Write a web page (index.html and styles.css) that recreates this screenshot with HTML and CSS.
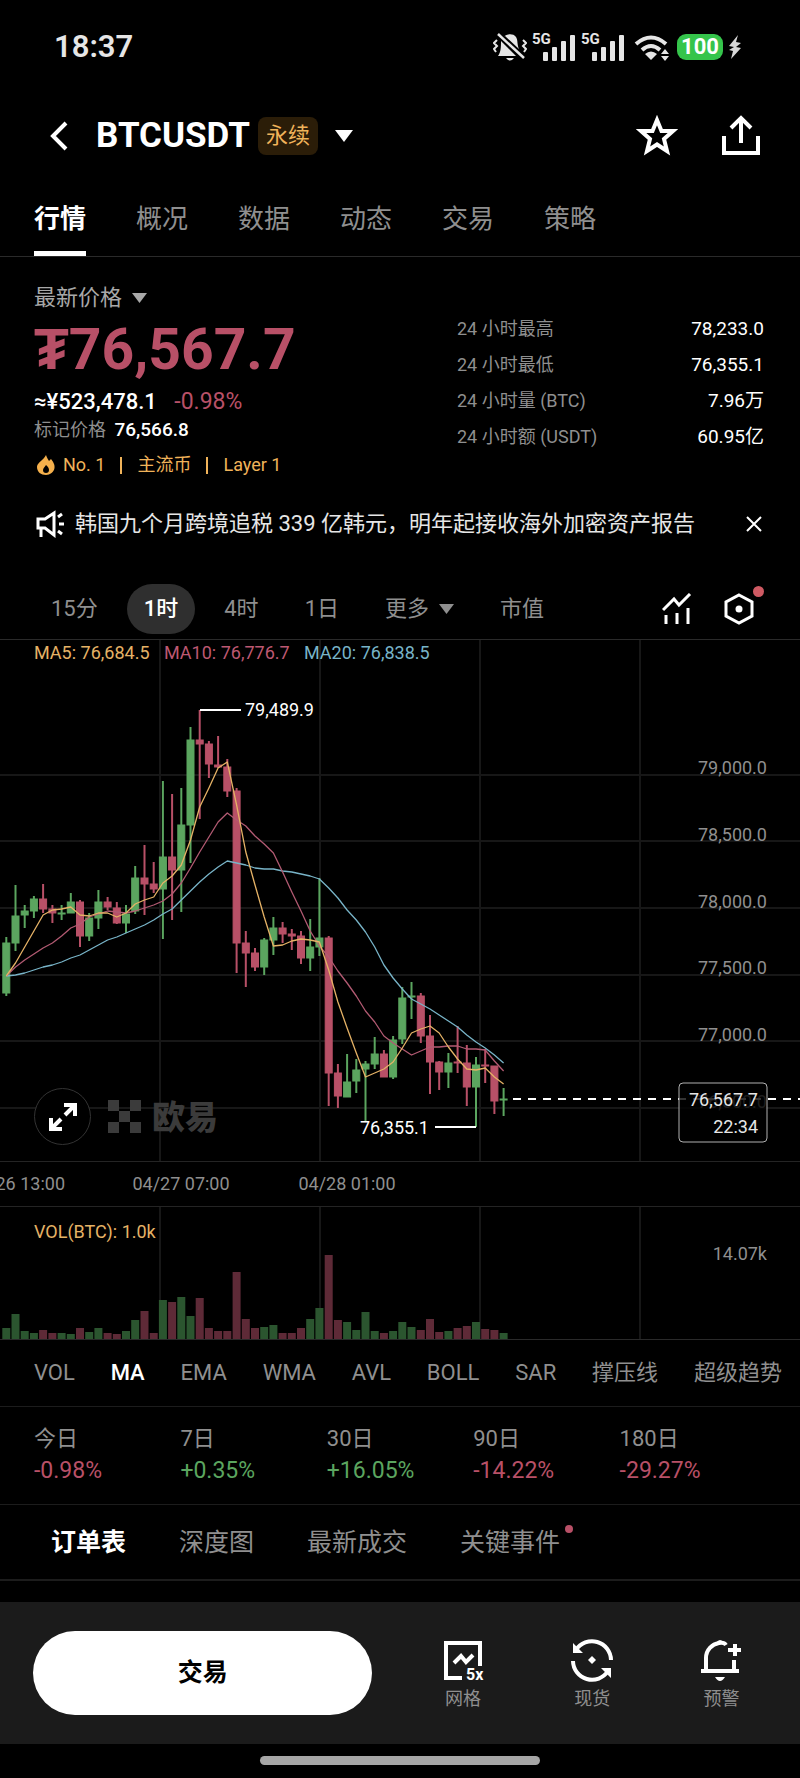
FILE: index.html
```html
<!DOCTYPE html>
<html lang="zh-CN">
<head>
    <meta charset="UTF-8">
    <meta name="viewport" content="width=device-width, initial-scale=1.0">
    <title>BTCUSDT 永续</title>
    <link rel="stylesheet" href="styles.css">
</head>
<body>
    <!-- Status bar -->
    <div class="status-bar">
        <span class="clock">18:37</span>
        <div class="status-icons">
            <svg width="34" height="30" viewBox="0 0 34 30" fill="#e6e6e6">
                <path d="M11 5C13 2 20 1 23 5C25 8 24 13 26 17L12 4Z"/>
                <path d="M8 9L23 24H5C8 20 8 15 8 9Z"/>
                <path d="M13 26H21Q17 31 13 26Z"/>
                <path d="M5 2L31 26" stroke="#e6e6e6" stroke-width="2.5"/>
                <path d="M4 8L1 11L4 14L1 17L3 20M30 8L33 11L30 14L33 17L31 20" fill="none" stroke="#e6e6e6" stroke-width="2"/>
            </svg>
            <svg class="signal" width="44" height="34" viewBox="0 -2 44 34" fill="#e6e6e6">
                <text x="0" y="12">5G</text>
                <rect x="11" y="20" width="5" height="9" rx="1"/>
                <rect x="20" y="15" width="5" height="14" rx="1"/>
                <rect x="29" y="9" width="5" height="20" rx="1"/>
                <rect x="38" y="3" width="5" height="26" rx="1"/>
            </svg>
            <svg class="signal" width="44" height="34" viewBox="0 -2 44 34" fill="#e6e6e6">
                <text x="0" y="12">5G</text>
                <rect x="11" y="20" width="5" height="9" rx="1"/>
                <rect x="20" y="15" width="5" height="14" rx="1"/>
                <rect x="29" y="9" width="5" height="20" rx="1"/>
                <rect x="38" y="3" width="5" height="26" rx="1"/>
            </svg>
            <svg class="wifi" width="36" height="30" viewBox="0 0 36 30" fill="none" stroke="#e6e6e6" stroke-width="4">
                <path d="M2 12Q17 -1 32 12"/>
                <path d="M8 18Q17 10 26 18"/>
                <path d="M17 28L11 22Q17 17 23 22Z" fill="#e6e6e6" stroke="none"/>
                <path d="M31 17L35 22H27ZM31 29L35 24H27Z" fill="#e6e6e6" stroke="none"/>
            </svg>
            <span class="battery">100</span>
            <svg class="bolt" width="14" height="26" viewBox="0 0 14 26" fill="#d8d8d8">
                <path d="M10 1L1 12L6 13L1 16L5 17L3 25L13 14L8 13L13 9L8 8Z"/>
            </svg>
        </div>
    </div>

    <!-- Title -->
    <header class="header">
        <button class="icon-btn" aria-label="返回">
            <svg width="19" height="30" viewBox="0 0 19 30" fill="none" stroke="#fff" stroke-width="4"><path d="M17 2L4 15L17 28"/></svg>
        </button>
        <h1 class="symbol">BTCUSDT</h1>
        <span class="badge">永续</span>
        <button class="icon-btn pair-caret" aria-label="切换交易对">
            <svg width="18" height="12" viewBox="0 0 18 12" fill="#fff"><path d="M0 0H18L9 12Z"/></svg>
        </button>
        <div class="header-actions">
            <button class="icon-btn" aria-label="收藏">
                <svg width="42" height="42" viewBox="0 0 42 42" fill="none" stroke="#fff" stroke-width="4"><path d="M21 5L25.500 16H37L28 24L31 36L21 29.500L11 36L14 24L5 16H16.500Z"/></svg>
            </button>
            <button class="icon-btn" aria-label="分享">
                <svg width="40" height="42" viewBox="0 0 40 42" fill="none" stroke="#fff" stroke-width="4"><path d="M3 21V38H37V21M20 28V4M10 13L20 3L30 13"/></svg>
            </button>
        </div>
    </header>

    <nav class="main-tabs">
        <a class="active" href="#market">行情</a>
        <a href="#overview">概况</a>
        <a href="#data">数据</a>
        <a href="#news">动态</a>
        <a href="#trade">交易</a>
        <a href="#strategy">策略</a>
    </nav>

    <!-- Price summary -->
    <section class="summary" id="market">
        <div class="price-block">
            <button class="price-type">最新价格 <svg width="15" height="10" viewBox="0 0 15 10" fill="#a8a8a8"><path d="M0 0H15L7.500 10Z"/></svg></button>
            <div class="last-price"><span class="currency">₮</span>76,567.7</div>
            <div class="fiat">≈¥523,478.1 <span class="change down">-0.98%</span></div>
            <div class="mark">标记价格 <b>76,566.8</b></div>
            <div class="tags">
                <svg width="18" height="20" viewBox="0 0 18 20"><path d="M9 0C10 3 11 4 12 6L14 4C16 7 18 9 17.500 13C17 17 13 20 9 20C4 20 0 17 0 12C0 9 3 7 5 5C7 3 8 2 9 0Z" fill="#f5b04c"/><path d="M9 10C11 12 12 13 12 15A3 3 0 0 1 6 15C6 13 8 12 9 10Z" fill="#000"/></svg>
                <span>No. 1</span><i></i><span>主流币</span><i></i><span>Layer 1</span>
            </div>
        </div>
        <dl class="stats">
            <div><dt>24 小时最高</dt><dd>78,233.0</dd></div>
            <div><dt>24 小时最低</dt><dd>76,355.1</dd></div>
            <div><dt>24 小时量 (BTC)</dt><dd>7.96万</dd></div>
            <div><dt>24 小时额 (USDT)</dt><dd>60.95亿</dd></div>
        </dl>
    </section>

    <!-- Announcement -->
    <div class="notice">
        <svg width="28" height="28" viewBox="0 0 28 28" fill="none" stroke="#fff" stroke-width="3"><path d="M2 9H9L18 3V25L9 18H2ZM5 18V27M22 7L26 4M23 14H28M22 21L26 24"/></svg>
        <a href="#notice">韩国九个月跨境追税 339 亿韩元，明年起接收海外加密资产报告</a>
        <button class="icon-btn" aria-label="关闭">
            <svg width="16" height="16" viewBox="0 0 16 16" stroke="#fff" stroke-width="2"><path d="M1 1L15 15M15 1L1 15"/></svg>
        </button>
    </div>

    <!-- Intervals -->
    <div class="intervals">
        <button>15分</button>
        <button class="active">1时</button>
        <button>4时</button>
        <button>1日</button>
        <button>更多 <svg width="15" height="10" viewBox="0 0 15 10" fill="#8f8f8f"><path d="M0 0H15L7.500 10Z"/></svg></button>
        <button>市值</button>
        <div class="chart-tools">
            <button aria-label="指标">
                <svg width="30" height="32" viewBox="0 0 30 32" fill="none" stroke="#fff" stroke-width="3"><path d="M1 17L12 6L17 12L28 1M4 22V31M15 20V31M26 15V31"/></svg>
            </button>
            <button class="has-dot" aria-label="设置">
                <svg width="30" height="32" viewBox="0 0 30 32" fill="none" stroke="#fff" stroke-width="3"><path d="M15 2L28 9V23L15 30L2 23V9Z"/><circle cx="15" cy="16" r="3.500" fill="#fff" stroke="none"/></svg>
            </button>
        </div>
    </div>

    <!-- Candles -->
    <div class="chart">
        <svg class="plot" viewBox="0 0 800 521">
            <path class="grid" d="M0 135H800M0 201H800M0 268H800M0 335H800M0 401H800M0 468H800M160 0V521M320 0V521M480 0V521M640 0V521"/>
            <g class="logo">
                <path d="M108 460h11v11h-11zM130 460h11v11h-11zM119 471h11v11h-11zM108 482h11v11h-11zM130 482h11v11h-11z"/>
                <text x="152" y="489">欧易</text>
            </g>
            <g id="candles"></g>
            <g id="averages"></g>
            <text class="ma5" x="34" y="19">MA5: 76,684.5</text>
            <text class="ma10" x="164" y="19">MA10: 76,776.7</text>
            <text class="ma20" x="304" y="19">MA20: 76,838.5</text>
            <g class="axis">
                <text x="767" y="134">79,000.0</text>
                <text x="767" y="201">78,500.0</text>
                <text x="767" y="268">78,000.0</text>
                <text x="767" y="334">77,500.0</text>
                <text x="767" y="401">77,000.0</text>
                <text x="767" y="468">76,500.0</text>
            </g>
            <path class="marker" d="M200 70H241M435 487H476"/>
            <text class="marker-text" x="245" y="76">79,489.9</text>
            <text class="marker-text" x="360" y="494">76,355.1</text>
            <path class="last-line" d="M513 459H800"/>
            <rect class="last-box" x="679" y="443" width="88" height="59" rx="4"/>
            <g class="last-text">
                <text x="758" y="466">76,567.7</text>
                <text x="758" y="493">22:34</text>
            </g>
        </svg>
        <button class="expand" aria-label="全屏">
            <svg width="30" height="30" viewBox="0 0 30 30" fill="none" stroke="#fff" stroke-width="4"><path d="M17 13L27 3M16 3H27V14M13 17L3 27M3 16V27H14"/></svg>
        </button>
    </div>
    <svg class="plot time-axis" viewBox="0 0 800 44">
        <text x="65" y="28" text-anchor="end">04/26 13:00</text>
        <text x="181" y="28" text-anchor="middle">04/27 07:00</text>
        <text x="347" y="28" text-anchor="middle">04/28 01:00</text>
    </svg>
    <svg class="plot volume" viewBox="0 0 800 132">
        <path class="grid" d="M160 0V132M320 0V132M480 0V132M640 0V132"/>
        <g id="volume"></g>
        <text class="ma5" x="34" y="31">VOL(BTC): 1.0k</text>
        <g class="axis"><text x="767" y="53">14.07k</text></g>
    </svg>

    <div class="indicators">
        <button>VOL</button>
        <button class="active">MA</button>
        <button>EMA</button>
        <button>WMA</button>
        <button>AVL</button>
        <button>BOLL</button>
        <button>SAR</button>
        <button>撑压线</button>
        <button>超级趋势</button>
    </div>

    <dl class="returns">
        <div><dt>今日</dt><dd class="down">-0.98%</dd></div>
        <div><dt>7日</dt><dd class="up">+0.35%</dd></div>
        <div><dt>30日</dt><dd class="up">+16.05%</dd></div>
        <div><dt>90日</dt><dd class="down">-14.22%</dd></div>
        <div><dt>180日</dt><dd class="down">-29.27%</dd></div>
    </dl>

    <nav class="book-tabs">
        <a class="active" href="#orders">订单表</a>
        <a href="#depth">深度图</a>
        <a href="#trades">最新成交</a>
        <a class="has-dot" href="#events">关键事件</a>
    </nav>

    <!-- Bottom bar -->
    <footer class="bottom-bar">
        <button class="trade">交易</button>
        <a class="shortcut" href="#grid">
            <svg width="42" height="44" viewBox="0 0 42 44" fill="none" stroke="#fff" stroke-width="4"><path d="M20 40H4V5H38V28M12 25L19 18L24 24L31 17"/><text x="24" y="42" class="leverage">5x</text></svg>
            网格
        </a>
        <a class="shortcut" href="#spot">
            <svg width="44" height="44" viewBox="0 0 44 44" fill="none" stroke="#fff" stroke-width="4"><path d="M41 22A19 19 0 0 0 6 12M3 23A19 19 0 0 0 38 33"/><path d="M3 5V15H13ZM41 40V30H31ZM22 18L26 22L22 26L18 22Z" fill="#fff" stroke="none"/></svg>
            现货
        </a>
        <a class="shortcut" href="#alert">
            <svg width="42" height="44" viewBox="0 0 42 44" fill="none" stroke="#fff" stroke-width="4"><path d="M1 33H39M6 32V20C6 12 12 6 19 5Q24 4 26 7M34 22V32M35 6V18M28 12H41"/><path d="M16 5Q20 -1 24 5ZM15 39H25Q20 47 15 39Z" fill="#fff" stroke="none"/></svg>
            预警
        </a>
    </footer>
    <div class="home-indicator"></div>

    <script src="chart.js"></script>
</body>
</html>
```
FILE: styles.css
```css
* {
    box-sizing: border-box;
}
body {
    margin: 0;
    background: #000;
    color: #fff;
    font-family: Roboto, "Noto Sans CJK SC", sans-serif;
    font-size: 22px;
    line-height: 32px;
}
button {
    padding: 0;
    border: none;
    background: none;
    color: inherit;
    font: inherit;
    cursor: pointer;
}
a {
    color: inherit;
    text-decoration: none;
}
svg {
    display: block;
    flex: none;
}
dl, dd, h1 {
    margin: 0;
}
.up {
    color: #5ba55f;
}
.down {
    color: #b85067;
}
.status-bar {
    display: flex;
    justify-content: space-between;
    align-items: center;
    height: 94px;
    padding: 0 58px 0 54px;
}
.clock {
    color: #e6e6e6;
    font-size: 31px;
    font-weight: 600;
}
.status-icons {
    display: flex;
    align-items: center;
    gap: 5px;
}
.signal text {
    font-size: 15px;
    font-weight: 700;
}
.wifi {
    margin-left: 4px;
}
.battery {
    width: 46px;
    margin-left: 2px;
    border-radius: 9px;
    background: #35c44b;
    font-size: 22px;
    font-weight: 700;
    line-height: 26px;
    text-align: center;
}
/* Header */
.header {
    display: flex;
    align-items: center;
    height: 84px;
    padding: 0 39px 0 49px;
}
.symbol {
    margin-left: 28px;
    font-size: 35px;
    font-weight: 700;
    line-height: 40px;
}
.badge {
    margin-left: 8px;
    padding: 0 8px;
    border-radius: 8px;
    background: #2b1d08;
    color: #f0b35a;
    line-height: 38px;
}
.pair-caret {
    margin-left: 17px;
}
.header-actions {
    display: flex;
    gap: 43px;
    margin-left: auto;
}
.main-tabs {
    display: flex;
    gap: 50px;
    height: 79px;
    padding: 0 34px;
    border-bottom: 1px solid #2a2a2a;
    color: #8f8f8f;
    font-size: 26px;
    line-height: 83px;
}
.main-tabs .active {
    border-bottom: 5px solid #fff;
    color: #fff;
    font-weight: 700;
}
/* Price summary */
.summary {
    display: flex;
    justify-content: space-between;
    padding: 25px 36px 0 34px;
}
.price-type {
    display: flex;
    align-items: center;
    gap: 10px;
    color: #a8a8a8;
}
.last-price {
    display: flex;
    align-items: center;
    height: 72px;
    color: #b85067;
    font-size: 57px;
    font-weight: 700;
}
.fiat {
    font-weight: 500;
}
.change {
    margin-left: 12px;
    font-size: 23px;
    font-weight: 400;
}
.mark {
    color: #8f8f8f;
    font-size: 18px;
    line-height: 24px;
}
.mark b {
    margin-left: 4px;
    color: #fff;
    font-size: 19px;
    font-weight: 500;
}
.tags {
    display: flex;
    align-items: center;
    gap: 15px;
    margin-top: 11px;
    padding-left: 3px;
    color: #f0b35a;
    font-size: 18px;
    line-height: 24px;
}
.tags svg {
    margin-right: -7px;
}
.tags i {
    width: 2px;
    height: 17px;
    background: #f0b35a;
}
.stats {
    width: 307px;
    padding-top: 29px;
    font-size: 18px;
}
.stats div {
    display: flex;
    justify-content: space-between;
    line-height: 36px;
}
.stats dt {
    color: #8f8f8f;
}
.stats dd {
    font-size: 19px;
}
.notice {
    display: flex;
    align-items: center;
    height: 50px;
    margin-top: 22px;
    padding: 0 38px 0 36px;
    color: #e6e6e6;
}
.notice a {
    flex: 1;
    margin-left: 11px;
    white-space: nowrap;
}
/* Intervals */
.intervals {
    display: flex;
    align-items: center;
    gap: 12px;
    height: 90px;
    padding: 30px 46px 0 34px;
    color: #8f8f8f;
}
.intervals > button {
    display: flex;
    align-items: center;
    gap: 10px;
    height: 50px;
    padding: 0 17px;
    border-radius: 25px;
}
.intervals > .active {
    background: #2f2f2f;
    color: #fff;
    font-weight: 500;
}
.chart-tools {
    display: flex;
    gap: 32px;
    margin-left: auto;
}
.has-dot {
    position: relative;
}
.has-dot::after {
    content: "";
    position: absolute;
    top: -7px;
    right: -10px;
    width: 11px;
    height: 11px;
    border-radius: 50%;
    background: #cf5a63;
}
/* Chart */
.chart {
    position: relative;
    border-top: 1px solid #2a2a2a;
    border-bottom: 1px solid #242424;
}
.plot {
    width: 100%;
    height: auto;
    font-size: 18px;
}
.grid {
    fill: none;
    stroke: #171717;
    stroke-width: 2;
}
.logo {
    fill: #3b3b3b;
    font-size: 33px;
    font-weight: 900;
}
.wick {
    stroke-width: 2;
}
.candle-up {
    fill: #5ba55f;
    stroke: #5ba55f;
}
.candle-down {
    fill: #b85067;
    stroke: #b85067;
}
.volume-up {
    fill: #2b552f;
}
.volume-down {
    fill: #5e2a37;
}
.average {
    fill: none;
    stroke-width: 1.3;
    stroke-linejoin: round;
}
.average-5 {
    stroke: #e5b266;
}
.average-10 {
    stroke: #b25a72;
}
.average-20 {
    stroke: #78b4c8;
}
.ma5 {
    fill: #e5b266;
}
.ma10 {
    fill: #bd5872;
}
.ma20 {
    fill: #78b4c8;
}
.axis text {
    fill: #8f8f8f;
    text-anchor: end;
}
.marker {
    stroke: #fff;
    stroke-width: 2;
}
.marker-text {
    fill: #fff;
}
.last-line {
    stroke: #fff;
    stroke-width: 2;
    stroke-dasharray: 8 7;
}
.last-box {
    fill: #000;
    fill-opacity: 0.8;
    stroke: #b0b0b0;
}
.last-text {
    fill: #e6e6e6;
    text-anchor: end;
}
.expand {
    position: absolute;
    bottom: 16px;
    left: 34px;
    display: flex;
    align-items: center;
    justify-content: center;
    width: 57px;
    height: 57px;
    border: 1px solid #333;
    border-radius: 50%;
    background: #000;
}
.time-axis {
    fill: #8f8f8f;
}
.volume {
    border-top: 1px solid #242424;
    border-bottom: 1px solid #2a2a2a;
}
.indicators {
    display: flex;
    justify-content: space-between;
    height: 67px;
    padding: 0 18px 0 34px;
    border-bottom: 1px solid #1c1c1c;
    color: #8f8f8f;
}
.indicators .active {
    color: #fff;
    font-weight: 500;
}
.returns {
    display: grid;
    grid-template-columns: repeat(5, 1fr);
    height: 98px;
    padding: 16px 34px 0;
    border-bottom: 1px solid #1c1c1c;
}
.returns dt {
    color: #8f8f8f;
}
.returns dd {
    font-size: 23px;
}
.book-tabs {
    display: flex;
    gap: 53px;
    height: 76px;
    padding: 22px 51px;
    border-bottom: 2px solid #1c1c1c;
    color: #8f8f8f;
    font-size: 25px;
}
.book-tabs .active {
    color: #fff;
    font-weight: 700;
}
.book-tabs .has-dot::after {
    width: 8px;
    height: 8px;
    top: -2px;
    right: -13px;
    background: #b85067;
}
/* Bottom bar */
.bottom-bar {
    display: flex;
    align-items: center;
    height: 142px;
    margin-top: 21px;
    padding: 0 14px 0 33px;
    background: #1b1b1b;
}
.trade {
    flex: 21;
    height: 84px;
    margin-right: 26px;
    border-radius: 42px;
    background: #fff;
    color: #000;
    font-size: 25px;
    font-weight: 700;
}
.shortcut {
    display: flex;
    flex: 8;
    flex-direction: column;
    align-items: center;
    gap: 4px;
    padding-top: 4px;
    color: #8f8f8f;
    font-size: 18px;
    line-height: 26px;
}
.leverage {
    fill: #fff;
    stroke: none;
    font-size: 16px;
    font-weight: 700;
}
.home-indicator {
    width: 35%;
    height: 9px;
    margin: 12px auto;
    border-radius: 5px;
    background: #a6a6a6;
}
```
FILE: chart.js
```js
// u = up, d = down, then high, body top, body bottom, low, volume
const candles = [
    ['u', 297, 303, 353, 356, 11], ['u', 245, 276, 303, 311, 25], ['u', 265, 271, 275, 288, 8],
    ['u', 256, 259, 271, 278, 6], ['d', 244, 259, 269, 273, 9], ['d', 265, 269, 273, 283, 6],
    ['u', 265, 273, 274, 280, 6], ['u', 253, 262, 273, 273, 5], ['d', 260, 262, 296, 307, 11],
    ['u', 273, 278, 296, 301, 7], ['u', 250, 262, 278, 289, 11], ['d', 257, 262, 267, 270, 6],
    ['d', 262, 268, 283, 284, 5], ['u', 265, 274, 283, 293, 8], ['u', 226, 238, 271, 274, 19],
    ['d', 205, 238, 244, 275, 28], ['d', 222, 244, 249, 253, 6], ['u', 141, 217, 249, 299, 39],
    ['d', 154, 217, 230, 280, 37], ['u', 148, 185, 230, 272, 42], ['u', 87, 100, 185, 223, 23],
    ['d', 70, 100, 104, 179, 41], ['d', 101, 104, 124, 138, 11], ['d', 96, 125, 127, 128, 8],
    ['d', 119, 127, 151, 157, 8], ['d', 148, 151, 303, 333, 67], ['d', 291, 303, 313, 347, 20],
    ['d', 308, 313, 327, 331, 11], ['u', 298, 300, 327, 335, 12], ['u', 277, 288, 300, 315, 14],
    ['d', 282, 288, 294, 303, 6], ['d', 289, 294, 296, 310, 6], ['d', 291, 296, 318, 324, 11],
    ['u', 279, 307, 318, 331, 20], ['u', 238, 298, 307, 316, 31], ['d', 296, 298, 433, 466, 84],
    ['d', 424, 433, 456, 468, 19], ['u', 414, 442, 457, 457, 17], ['u', 419, 430, 441, 453, 9],
    ['u', 421, 424, 429, 481, 27], ['u', 397, 414, 424, 429, 8], ['d', 410, 414, 437, 437, 6],
    ['u', 396, 400, 437, 439, 8], ['u', 347, 358, 399, 404, 17], ['u', 342, 356, 357, 379, 12],
    ['d', 353, 356, 396, 403, 9], ['d', 375, 396, 422, 454, 20], ['d', 421, 422, 432, 450, 7],
    ['u', 413, 423, 432, 448, 8], ['d', 386, 422, 423, 433, 11], ['d', 405, 423, 447, 466, 13],
    ['u', 417, 425, 447, 487, 17], ['d', 409, 425, 426, 443, 10], ['d', 426, 426, 461, 474, 9],
    ['u', 448, 459, 460, 476, 6]
];

const averages = {
    20: [336, 335, 333, 330, 327, 325, 322, 318, 315, 310, 305, 300, 297, 293, 289, 285, 280, 274, 269,
        260, 251, 242, 234, 227, 221, 223, 225, 228, 229, 229, 231, 232, 234, 236, 239, 248, 258, 270,
        280, 292, 307, 325, 338, 349, 359, 364, 369, 375, 381, 387, 395, 402, 408, 415, 423],
    10: [336, 327, 320, 314, 308, 303, 296, 288, 284, 277, 274, 271, 272, 273, 271, 268, 265, 261, 254,
        243, 228, 212, 197, 182, 173, 180, 186, 196, 204, 213, 232, 252, 271, 291, 306, 317, 331, 343,
        356, 371, 382, 396, 403, 409, 415, 411, 407, 407, 406, 406, 409, 409, 410, 421, 431],
    5: [336, 323, 307, 291, 275, 270, 269, 267, 275, 276, 273, 273, 277, 273, 264, 260, 257, 243, 236,
        225, 200, 167, 148, 128, 122, 165, 212, 245, 277, 306, 305, 301, 299, 300, 302, 330, 362, 388,
        413, 437, 433, 429, 422, 408, 393, 389, 386, 393, 407, 419, 429, 430, 428, 437, 444]
};

const step = 9.21;
const firstX = 6.3;
const volumeBase = 132;

function centerX(i) {
    return (firstX + i * step).toFixed(1);
}

let candleMarkup = '';
let volumeMarkup = '';
candles.forEach(([side, high, top, bottom, low, volume], i) => {
    const x = centerX(i);
    const name = side === 'u' ? 'up' : 'down';
    candleMarkup += `<g class="candle-${name}"><path class="wick" d="M${x} ${high}V${low}"/>` +
        `<rect x="${x - 3.5}" y="${top}" width="7" height="${Math.max(bottom - top, 0.5)}"/></g>`;
    volumeMarkup += `<rect class="volume-${name}" x="${x - 4}" y="${volumeBase - volume}" width="8" height="${volume}"/>`;
});
document.getElementById('candles').innerHTML = candleMarkup;
document.getElementById('volume').innerHTML = volumeMarkup;

document.getElementById('averages').innerHTML = [20, 10, 5].map(period => {
    const points = averages[period].map((y, i) => `${centerX(i)},${y}`).join(' ');
    return `<polyline class="average average-${period}" points="${points}"/>`;
}).join('');
```
